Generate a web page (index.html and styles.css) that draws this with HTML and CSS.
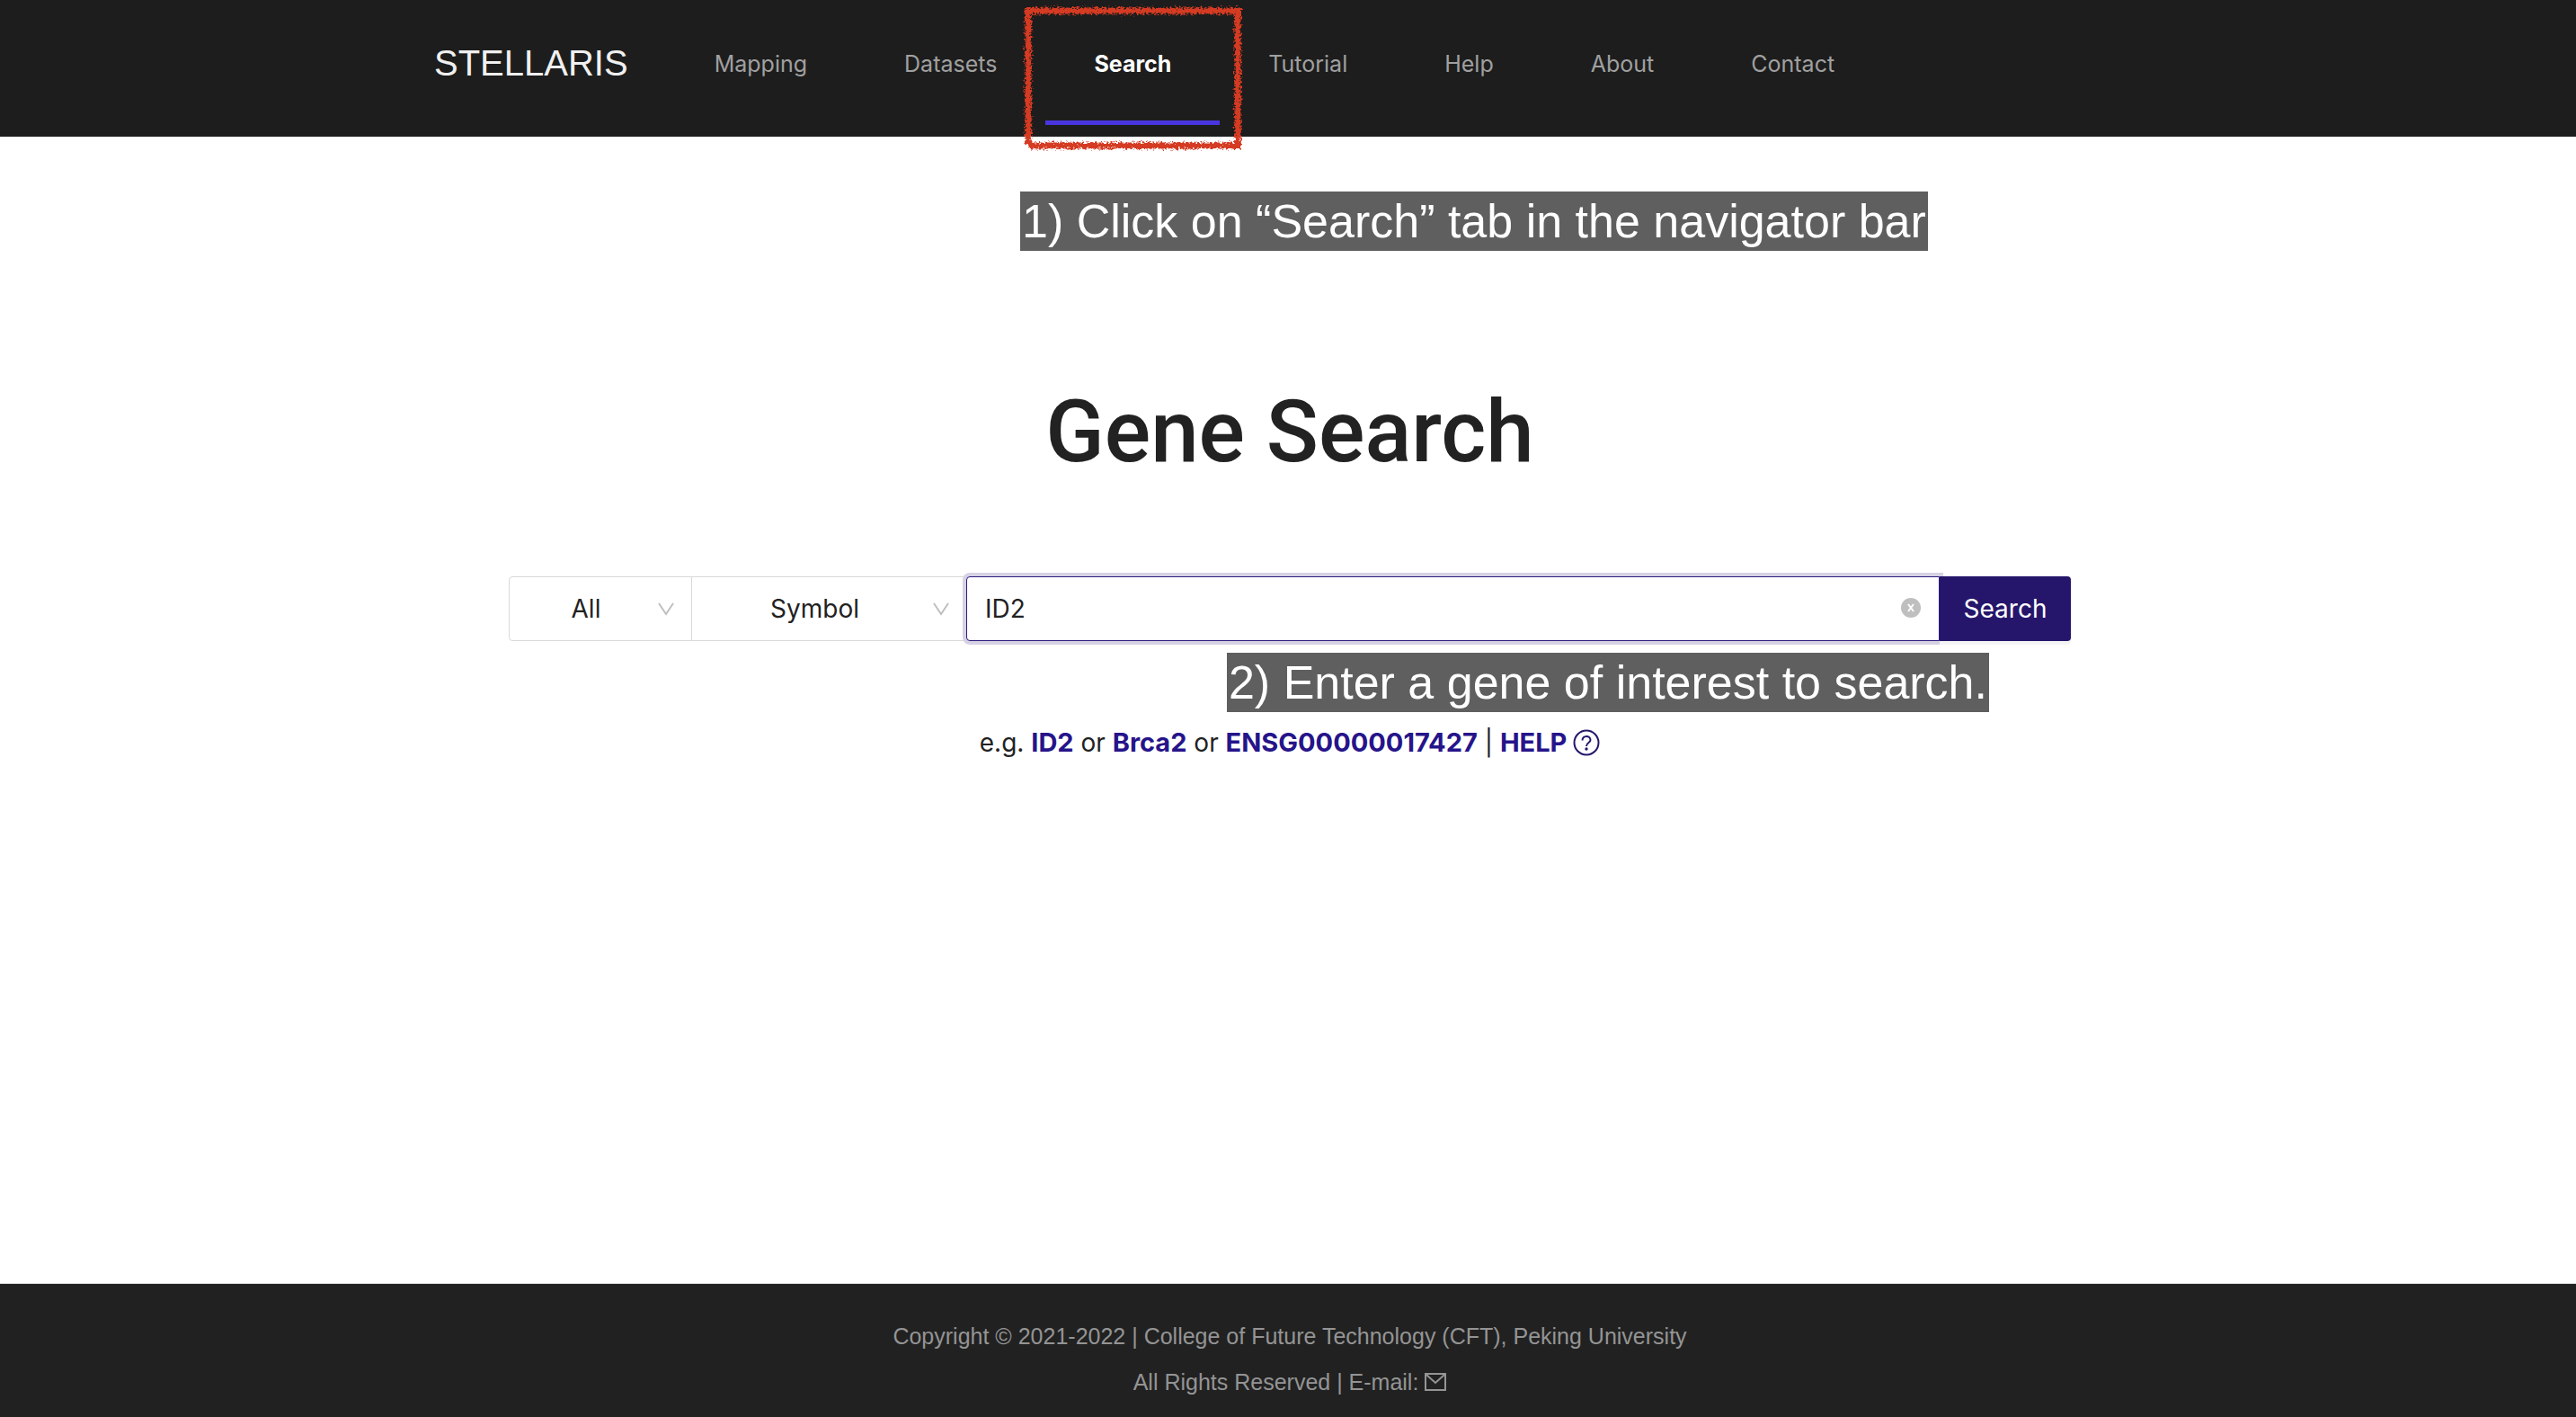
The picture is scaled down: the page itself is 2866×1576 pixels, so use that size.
FILE: index.html
```html
<!DOCTYPE html>
<html lang="en">
<head>
<meta charset="utf-8">
<title>STELLARIS - Gene Search</title>
<link rel="stylesheet" href="styles.css">
</head>
<body>
<header class="header">
  <div class="header-inner">
    <a class="logo" href="#">STELLARIS</a>
    <nav class="nav">
      <a class="nav-link" href="#">Mapping</a>
      <a class="nav-link" href="#">Datasets</a>
      <a class="nav-link active" href="#">Search
        <svg class="marker" width="250" height="168" viewBox="0 0 250 168" aria-hidden="true">
          <filter id="chalk" x="0" y="0" width="250" height="168" filterUnits="userSpaceOnUse">
            <feTurbulence type="fractalNoise" baseFrequency="0.45" numOctaves="2" seed="4" result="noise"/>
            <feDisplacementMap in="SourceGraphic" in2="noise" scale="9" xChannelSelector="R" yChannelSelector="G"/>
          </filter>
          <path d="M4 9H245M241 5V163M245 159H9M8 5V158" fill="none" stroke="#d43a22" stroke-width="7" filter="url(#chalk)"/>
        </svg>
      </a>
      <a class="nav-link" href="#">Tutorial</a>
      <a class="nav-link" href="#">Help</a>
      <a class="nav-link" href="#">About</a>
      <a class="nav-link" href="#">Contact</a>
    </nav>
  </div>
</header>

<main class="main">
  <p class="note note-nav">1) Click on “Search” tab in the navigator bar</p>
  <h1 class="title">Gene Search</h1>
  <form class="search" onsubmit="return false">
    <div class="select select-species">
      <select aria-label="Species"><option>All</option></select>
      <svg class="chevron" width="20" height="16" viewBox="0 0 20 16" aria-hidden="true"><path d="M2 1L10 13L18 1"/></svg>
    </div>
    <div class="select select-type">
      <select aria-label="Identifier type"><option>Symbol</option></select>
      <svg class="chevron" width="20" height="16" viewBox="0 0 20 16" aria-hidden="true"><path d="M2 1L10 13L18 1"/></svg>
    </div>
    <div class="query">
      <input type="text" value="ID2" aria-label="Gene">
      <button class="clear" type="button" aria-label="Clear">
        <svg width="22" height="22" viewBox="0 0 22 22"><circle cx="11" cy="11" r="11" fill="#bfbfbf"/><path d="M8 7L14 15M14 7L8 15" stroke="#fff" stroke-width="2"/></svg>
      </button>
    </div>
    <button class="submit" type="submit">Search</button>
    <p class="note note-query">2) Enter a gene of interest to search.</p>
  </form>
  <p class="examples">e.g. <a href="#">ID2</a> or <a href="#">Brca2</a> or <a href="#">ENSG00000017427</a> | <a href="#">HELP <svg class="help" width="30" height="30" viewBox="0 0 30 30" aria-hidden="true"><circle cx="15" cy="15" r="13.5"/><path d="M10.5 12.5C10.5 6.500 19.500 6.500 19.500 12C19.500 15.500 15 14.500 15 19"/><circle class="dot" cx="15" cy="22" r="1.700"/></svg></a></p>
</main>

<footer class="footer">
  <p>Copyright © 2021-2022 | College of Future Technology (CFT), Peking University</p>
  <p>All Rights Reserved | E-mail: <a href="#" aria-label="E-mail"><svg class="mail" width="24" height="20" viewBox="0 0 24 20"><path d="M1 1H23V19H1ZM2 2L12 11L22 2"/></svg></a></p>
</footer>
</body>
</html>
```
FILE: styles.css
```css
* { box-sizing: border-box; }

body {
  margin: 0;
  min-height: 100vh;
  display: flex;
  flex-direction: column;
  background: #fff;
  color: #222;
  font-family: Inter, "Liberation Sans", sans-serif;
  font-size: 28px;
}

p, h1 { margin: 0; }
a { text-decoration: none; color: inherit; }

.header { background: #1d1d1d; }

.header-inner {
  max-width: 1900px;
  margin: 0 auto;
  height: 152px;
  display: flex;
}

.logo {
  margin-right: 42px;
  color: #f0f0f0;
  font-family: "Liberation Sans", Arial, sans-serif;
  font-size: 40px;
  line-height: 140px;
}

.nav { display: flex; }

.nav-link {
  position: relative;
  height: 139px;
  padding: 0 54px;
  color: #a0a0a0;
  font-size: 25px;
  line-height: 142px;
}

.nav-link.active {
  border-bottom: 5px solid #4935e0;
  color: #fff;
  font-weight: 700;
}

.marker {
  position: absolute;
  left: -27px;
  top: 3px;
}

.main {
  position: relative;
  flex: 1;
  padding-left: 4px;
  display: flex;
  flex-direction: column;
  align-items: center;
}

.note {
  position: absolute;
  padding: 0 2px;
  background: #5f5f5f;
  color: #fff;
  font-family: "Liberation Sans", Arial, sans-serif;
  font-size: 52px;
  line-height: 66px;
  white-space: nowrap;
}

.note-nav {
  top: 61px;
  left: calc(50% - 298px);
}

.note-query {
  top: 85px;
  right: 91px;
}

.title {
  margin-top: 268px;
  font-family: Roboto, Inter, sans-serif;
  font-size: 96px;
  font-weight: 500;
  line-height: 120px;
}

.search {
  position: relative;
  width: 1738px;
  max-width: 100%;
  height: 72px;
  margin-top: 101px;
  display: flex;
}

.select {
  position: relative;
  border: 1px solid #d9d9d9;
}

.select-species {
  width: 204px;
  border-radius: 4px 0 0 4px;
}

.select-type {
  width: 306px;
  margin-left: -1px;
  border-right: 0;
}

.select select {
  appearance: none;
  width: 100%;
  height: 100%;
  padding: 0 54px 0 22px;
  border: 0;
  background: transparent;
  color: #222;
  font: inherit;
  text-align-last: center;
}

.chevron {
  position: absolute;
  right: 18px;
  top: 28px;
  fill: none;
  stroke: #bfbfbf;
  stroke-width: 2;
  pointer-events: none;
}

.query {
  position: relative;
  flex: 1;
}

.query input {
  width: 100%;
  height: 100%;
  padding: 0 64px 0 20px;
  border: 1px solid #2c1b7d;
  border-radius: 4px 0 0 4px;
  outline: none;
  box-shadow: 0 0 0 4px #d6d1e4;
  color: #222;
  font: inherit;
}

.clear {
  position: absolute;
  top: 24px;
  right: 21px;
  display: flex;
  padding: 0;
  border: 0;
  background: none;
}

.submit {
  width: 146px;
  padding: 0;
  border: 0;
  border-radius: 0 4px 4px 0;
  position: relative;
  background: #25166b;
  box-shadow: 0 4px 0 #f4f4f4;
  color: #fff;
  font: inherit;
}

.examples {
  margin-top: 93px;
  line-height: 40px;
}

.examples a {
  color: #26148a;
  font-size: 29px;
  font-weight: 700;
}

.help {
  vertical-align: -5px;
  fill: none;
  stroke: #25166b;
  stroke-width: 2;
}

.help .dot {
  fill: #25166b;
  stroke: none;
}

.footer {
  padding: 33px 0 13px 4px;
  border-top: 1px solid #ddd;
  background: #212121;
  color: #949494;
  font-family: "Liberation Sans", Arial, sans-serif;
  font-size: 25px;
  line-height: 51px;
  text-align: center;
}

.mail {
  vertical-align: -1px;
  fill: none;
  stroke: #949494;
  stroke-width: 2;
}
```
